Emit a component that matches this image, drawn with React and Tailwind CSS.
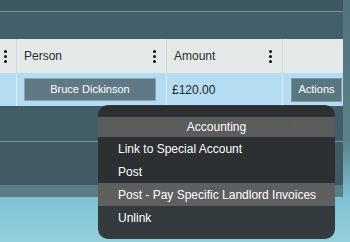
import React from "react";

function Kebab() {
  return (
    <div className="flex flex-col gap-[2px]">
      <span className="block w-[3px] h-[3px] rounded-full bg-[#111]" />
      <span className="block w-[3px] h-[3px] rounded-full bg-[#111]" />
      <span className="block w-[3px] h-[3px] rounded-full bg-[#111]" />
    </div>
  );
}

const menuItems = [
  { label: "Link to Special Account" },
  { label: "Post" },
  { label: "Post - Pay Specific Landlord Invoices", active: true },
  { label: "Unlink" },
];

export default function App() {
  return (
    <div
      className="relative w-[350px] h-[242px] overflow-hidden bg-[linear-gradient(180deg,#52737c_0%,#5b828b_58%,#7ec1d4_82%,#94cfdc_100%)]"
      style={{ fontFamily: '"Liberation Sans", Arial, sans-serif' }}
    >
      <div className="w-[343px] bg-[#405c64]">
        <div className="h-[12px] bg-[#3c5860] border-b border-[#7a9298]" />
        <div className="h-[27px] bg-[#43606a]" />

        {/* grid header */}
        <div className="flex h-[34px] bg-[#e6e9ea] text-[12px] text-[#2b2b2b]">
          <div className="w-[17px] flex items-center justify-start pl-[4px] border-r border-[#d2d6d8]">
            <Kebab />
          </div>
          <div className="w-[150px] flex items-center justify-between pl-[7px] pr-[10px] border-r border-[#d2d6d8]">
            <span>Person</span>
            <Kebab />
          </div>
          <div className="w-[116px] flex items-center justify-between pl-[7px] pr-[10px] border-r border-[#d2d6d8]">
            <span>Amount</span>
            <Kebab />
          </div>
          <div className="flex-1" />
        </div>

        {/* data row */}
        <div className="flex h-[33px] bg-[#b4ddf4] text-[12px] text-[#222]">
          <div className="w-[17px] border-r border-[#dceef8]" />
          <div className="w-[150px] flex items-center pl-[7px] pr-[10px] border-r border-[#dceef8]">
            <div className="w-[132px] h-[23px] flex items-center justify-center bg-[#5f7987] border border-[#8ea3ad] text-white text-[11px]">
              Bruce Dickinson
            </div>
          </div>
          <div className="w-[116px] flex items-center pl-[5px] border-r border-[#dceef8]">
            £120.00
          </div>
          <div className="flex-1 flex items-center justify-end pr-[1px]">
            <div className="w-[51px] h-[24px] flex items-center justify-center bg-[#5b7683] border border-[#7f97a2] text-white text-[11px]">
              Actions
            </div>
          </div>
        </div>

        {/* pager */}
        <div className="h-[36px] flex items-center justify-end pr-[13px] bg-[#415d66] border-b border-[#7d969c] text-[12px] text-[#d4dadc]">
          1 - 1 of 1 items
        </div>
        <div className="h-[43px] bg-[#405b63]" />
        <div className="h-[12px] bg-[#5a7e87]" />
      </div>

      {/* accounting menu */}
      <div className="absolute left-[98px] top-[105px] w-[237px] pt-[12px] pb-[10px] rounded-[10px] bg-[#2a2b2c]/90 text-white text-[12px]">
        <div className="h-[20px] flex items-center justify-center bg-[#646464]/85">Accounting</div>
        {menuItems.map((it) => (
          <div
            key={it.label}
            className={
              "h-[23px] flex items-center pl-[20px] " + (it.active ? "bg-[#5f5f5f]" : "")
            }
          >
            {it.label}
          </div>
        ))}
      </div>
    </div>
  );
}
